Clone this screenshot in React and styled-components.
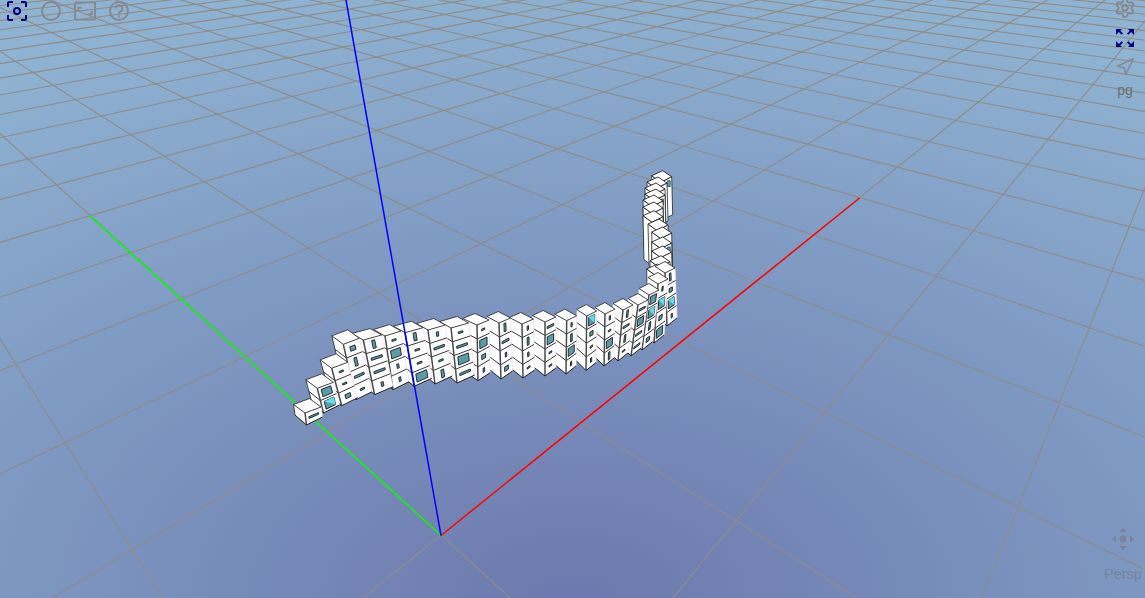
import styled, { createGlobalStyle } from "styled-components";
import { Settings, Navigation } from "lucide-react";

const GlobalStyle = createGlobalStyle`
  html, body, #root {
    margin: 0;
    width: 100%;
    height: 100%;
    overflow: hidden;
  }
`;

// ground grid, fitted to the axes of the viewport
const project = (x, y) => {
  const w = 1 + 0.2025 * x + 0.1797 * y;
  return [441 + (168.5 * x - 133.2 * y) / w, 535 + (-135.8 * x - 121.3 * y) / w];
};

const gridLines = () => {
  const lines = [];
  const from = -3;
  const to = 40;
  for (let i = from; i <= to; i++) {
    const minY = Math.max(from, (-0.88 - 0.2025 * i) / 0.1797);
    const minX = Math.max(from, (-0.88 - 0.1797 * i) / 0.2025);
    lines.push([project(i, minY), project(i, to)]);
    lines.push([project(minX, i), project(to, i)]);
  }
  return lines;
};

// fx, fy: front corner of the roof. bx, by: front corner on the ground
const COLUMNS = [
  [305, 413, 306.5, 425, 1, 0.85, "h"],
  [317.3, 388.3, 323.5, 413, 2, 0.85, "bc"],
  [331.7, 368.3, 341.7, 405.7, 3, 0.85, "tts"],
  [343.3, 344.3, 356, 399.7, 4, 0.85, "svht"],
  [363.3, 340, 374.6, 394.7, 4, 0.85, "vhhk"],
  [385, 336, 393, 389.7, 4, 0.8, "tbkk"],
  [405, 332.7, 414, 386.3, 4, 0.78, "vttb"],
  [428, 330, 435, 384, 4, 0.75, "khtv"],
  [451, 328, 457, 383, 4, 0.68, "thbh"],
  [477, 325, 478, 380.7, 4, 0.55, "tbsk"],
  [499, 323, 501, 379, 4, 0.5, "vhks"],
  [522, 324, 523, 378, 4, 0.5, "kvkt"],
  [545, 322, 545, 376, 4, 0.5, "hbtt"],
  [566.7, 320.7, 566, 374, 4, 0.5, "kvbk"],
  [586.7, 316, 586, 370.5, 4, 0.5, "cstk"],
  [605, 314, 604, 366, 4, 0.5, "ktbv"],
  [623, 310, 618, 361, 4, 0.5, "vhvt"],
  [638, 305, 631, 356, 4, 0.5, "hbhh"],
  [649, 295, 642, 350, 4, 0.5, "bcvs"],
  [658, 284, 654, 343, 4, 0.5, "kcsb"],
  [665, 273, 667, 326, 4, 0.5, "vsck"],
];

// far leg of the ribbon, roof centres, far end first
const STACK = [
  [661.7, 176.7, 38],
  [657, 183, 38],
  [655, 189, 40],
  [655, 195, 40],
  [653, 201, 42],
  [653, 208, 42],
  [653, 216.7, 44],
  [658, 225, 42],
  [661.7, 233, 44],
  [661.7, 243, 46],
  [661.7, 252, 48],
  [660, 261.7, 50],
  [656.7, 270, 52],
];

const WINDOWS = {
  h: [0.6, 0.16],
  t: [0.26, 0.12],
  v: [0.16, 0.6],
  s: [0.32, 0.32],
  b: [0.6, 0.6],
  k: [0.12, 0.32],
  c: [0.6, 0.64],
};

const lerp = (a, b, t) => [a[0] + (b[0] - a[0]) * t, a[1] + (b[1] - a[1]) * t];
const pts = (list) => list.map((p) => `${p[0].toFixed(1)},${p[1].toFixed(1)}`).join(" ");

const Window = ({ quad, kind }) => {
  const [tl, tr, bl, br] = quad;
  const [w, h] = WINDOWS[kind];
  const at = (u, v) => lerp(lerp(tl, tr, u), lerp(bl, br, u), v);
  const a = 0.5 - w / 2;
  const b = 0.5 + w / 2;
  const c = 0.5 - h / 2;
  const d = 0.5 + h / 2;
  return (
    <g>
      <polygon points={pts([at(a, c), at(b, c), at(b, d), at(a, d)])} fill="#5b9aa6" stroke="#141f24" strokeWidth="0.9" />
      {kind === "c" && <polygon points={pts([at(a, c), at(b, c), at(b, d)])} fill="#62dcee" />}
    </g>
  );
};

const Column = ({ index }) => {
  const [fx, fy, bx, by, floors, share, win] = COLUMNS[index];
  const next = COLUMNS[index + 1];
  const prev = COLUMNS[index - 1];
  const spacing = next ? next[0] - fx : 9;
  const stepped = index < 4;
  const rx = stepped ? 16 : Math.max(spacing * share, index >= 14 ? 10 : 7);
  const lx = index < 9 ? -11.5 : index >= 14 ? -10 : -Math.max((fx - prev[0]) * 0.55, 7);
  const F = [fx, fy];
  const G = [bx, by];
  const L = [fx + lx, fy - (stepped ? 8.5 : 6.5)];
  const R = [fx + rx, fy - (stepped ? 6 : 5)];
  const LG = [bx + lx, by - 10];
  const RG = [bx + rx, by - 8];
  const B = [L[0] + R[0] - fx, L[1] + R[1] - fy];
  const floorLines = [];
  const panes = [];
  for (let k = 0; k < floors; k++) {
    const v0 = k / floors;
    const v1 = (k + 1) / floors;
    if (k > 0) floorLines.push(pts([lerp(L, LG, v0), lerp(F, G, v0), lerp(R, RG, v0)]));
    panes.push(
      <Window
        key={k}
        kind={win[k]}
        quad={[lerp(F, G, v0), lerp(R, RG, v0), lerp(F, G, v1), lerp(R, RG, v1)]}
      />,
    );
  }
  return (
    <g>
      <polygon points={pts([L, F, G, LG])} fill="#fff" />
      <polygon points={pts([F, R, RG, G])} fill="#fff" />
      <line x1={R[0]} y1={R[1]} x2={RG[0]} y2={RG[1]} stroke="#f6dfe1" strokeWidth="0.8" />
      {stepped && <line x1={L[0]} y1={L[1]} x2={LG[0]} y2={LG[1]} stroke="#333" strokeWidth="0.9" />}
      {floorLines.map((p) => (
        <polyline key={p} points={p} fill="none" stroke="#222" strokeWidth="0.9" />
      ))}
      {panes}
      <line x1={F[0]} y1={F[1]} x2={G[0]} y2={G[1]} stroke="#4a4a4a" strokeWidth="1.5" />
      <polyline points={pts([LG, G, RG])} fill="none" stroke="#222" strokeWidth="1" />
      <polygon points={pts([L, F, R, B])} fill="#fff" stroke="#333" strokeWidth="0.9" />
    </g>
  );
};

const StackColumn = ({ cx, cy, height, pane }) => {
  const L = [cx - 10, cy - 1];
  const F = [cx - 1, cy + 5.5];
  const R = [cx + 10, cy];
  const B = [cx + 1, cy - 6];
  const down = (p) => [p[0] + 1, p[1] + height];
  return (
    <g>
      <polygon points={pts([L, F, down(F), down(L)])} fill="#fff" stroke="#222" strokeWidth="0.8" />
      <polygon points={pts([F, R, down(R), down(F)])} fill="#fff" stroke="#222" strokeWidth="0.8" />
      {pane && <rect x={cx + 6} y={cy + 4} width="2.5" height="6" fill="#5b9aa6" stroke="#1d2b30" strokeWidth="0.6" />}
      <polygon points={pts([L, F, R, B])} fill="#fff" stroke="#222" strokeWidth="0.9" />
    </g>
  );
};

const Building = () => (
  <g>
    {STACK.map(([cx, cy, height], i) => (
      <StackColumn key={i} cx={cx} cy={cy} height={height} pane={i % 3 === 0} />
    ))}
    {COLUMNS.map((_, i) => COLUMNS.length - 1 - i).map((i) => (
      <Column key={i} index={i} />
    ))}
  </g>
);

const FocusIcon = () => (
  <svg width="20" height="20" viewBox="0 0 20 20" fill="none" stroke="#000080" strokeWidth="2">
    <path d="M1 6V2.2Q1 1 2.2 1H6M14 1h3.8Q19 1 19 2.2V6M19 14v3.8Q19 19 17.8 19H14M6 19H2.2Q1 19 1 17.8V14" />
    <circle cx="10" cy="10" r="3" />
  </svg>
);

const CircleIcon = () => (
  <svg width="20" height="20" viewBox="0 0 20 20" fill="none" stroke="#85898e" strokeWidth="2">
    <circle cx="10" cy="10" r="9" />
  </svg>
);

const FrameIcon = () => (
  <svg width="23" height="20" viewBox="0 0 23 20" fill="none" stroke="#85898e" strokeWidth="2">
    <rect x="1" y="1" width="21" height="18" rx="1" />
    <path d="M4.5 10V6.5H8M18.5 10v3.5H15" />
  </svg>
);

const HelpIcon = () => (
  <svg width="20" height="20" viewBox="0 0 20 20" fill="none" stroke="#85898e" strokeWidth="2">
    <circle cx="10" cy="10" r="9" />
    <path d="M6.8 7.4A3.3 3.3 0 1 1 11.6 10.4Q10 11.3 10 13" />
    <path d="M10 14.6v1.6" />
  </svg>
);

const ExpandIcon = () => (
  <svg width="18" height="18" viewBox="0 0 18 18" fill="#000080">
    <path d="M0 0h6L4.3 1.7 7 4.4 5.6 5.8 2.9 3.1 0 6zM18 0v6l-2.9-2.9-2.7 2.7L11 4.4l2.7-2.7L12 0zM0 18v-6l2.9 2.9 2.7-2.7L7 13.6l-2.7 2.7L6 18zM18 18h-6l1.7-1.7L11 13.6l1.4-1.4 2.7 2.7L18 12z" />
  </svg>
);

const MoveIcon = () => (
  <svg width="22" height="22" viewBox="0 0 22 22" fill="#7a8294">
    <path d="M11 0l3.5 4h-7zM11 22l-3.5-4h7zM0 11l4-3.5v7zM22 11l-4 3.5v-7z" />
    <circle cx="11" cy="11" r="3.4" />
  </svg>
);

function App() {
  return (
    <Viewport>
      <GlobalStyle />
      <Scene viewBox="0 0 1145 598">
        {gridLines().map(([a, b], i) => (
          <GridLine key={i} x1={a[0]} y1={a[1]} x2={b[0]} y2={b[1]} />
        ))}
        <Axis x1="441" y1="535.5" x2="90" y2="216" stroke="#00ff00" />
        <Axis x1="441" y1="535.5" x2="859.6" y2="198" stroke="#ff0000" />
        <Building />
        <Axis x1="441" y1="535.5" x2="346" y2="0" stroke="#0000ff" />
      </Scene>
      <Toolbar>
        <ToolButton>
          <FocusIcon />
        </ToolButton>
        <ToolButton>
          <CircleIcon />
        </ToolButton>
        <ToolButton>
          <FrameIcon />
        </ToolButton>
        <ToolButton>
          <HelpIcon />
        </ToolButton>
      </Toolbar>
      <SideRail>
        <Settings size={22} color="#85898e" strokeWidth={2} />
        <ExpandIcon />
        <Navigation size={20} color="#85898e" strokeWidth={1.8} />
        <RailLabel>pg</RailLabel>
      </SideRail>
      <CameraControl>
        <MoveIcon />
        <CameraLabel>Persp</CameraLabel>
      </CameraControl>
    </Viewport>
  );
}

const Viewport = styled.div`
  position: relative;
  width: 100%;
  height: 100%;
  overflow: hidden;
  font-family: "Liberation Sans", Arial, sans-serif;
  background: radial-gradient(ellipse 1100px 640px at 50% 100%, #6c79ae 0%, #8fb4d3 100%);
`;
const Scene = styled.svg`
  display: block;
  width: 100%;
  height: 100%;
`;
const GridLine = styled.line`
  stroke: #918b86;
  stroke-width: 1.1;
`;
const Axis = styled.line`
  stroke-width: 1.5;
`;
const Toolbar = styled.div`
  position: absolute;
  top: 1px;
  left: 6px;
  display: flex;
  align-items: center;
  gap: 12px;
`;
const ToolButton = styled.div`
  display: flex;
  justify-content: center;
  width: 22px;
`;
const SideRail = styled.div`
  position: absolute;
  top: -3px;
  right: 0;
  width: 40px;
  display: flex;
  flex-direction: column;
  align-items: center;
  gap: 10px;
`;
const RailLabel = styled.span`
  margin-top: -5px;
  font-size: 14px;
  color: #6b7078;
`;
const CameraControl = styled.div`
  position: absolute;
  right: -6px;
  bottom: 16px;
  width: 56px;
  display: flex;
  flex-direction: column;
  align-items: center;
  gap: 16px;
`;
const CameraLabel = styled.span`
  font-size: 14.5px;
  line-height: 16px;
  color: #78839e;
`;

export default App;
